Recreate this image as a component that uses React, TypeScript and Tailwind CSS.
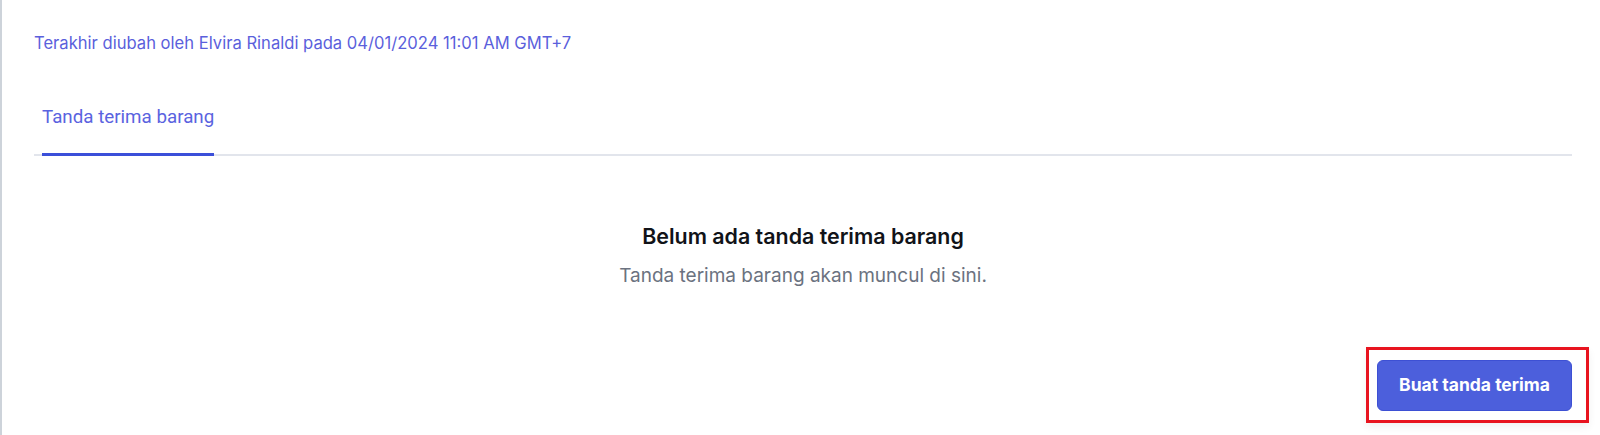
import React from "react";

export default function App() {
  return (
    <div className="h-[435px] w-[1600px] overflow-hidden bg-white">
      <div className="flex h-full flex-col border-l-2 border-[#cdd3da] pl-8 pr-7 pt-[31px] font-['Inter',sans-serif]">
        <p className="text-[16.6px] leading-6 text-[#5b5fdc]">
          Terakhir diubah oleh Elvira Rinaldi pada 04/01/2024 11:01 AM GMT+7
        </p>

        <div className="mt-[48px] flex border-b-2 border-[#e2e5ec] pl-2">
          <button className="-mb-[2px] border-b-[3px] border-[#3b4fd9] pb-[22px] font-['Roboto',sans-serif] text-[18.75px] leading-7 text-[#5a63e0]">
            Tanda terima barang
          </button>
        </div>

        <div className="mt-[64px] flex flex-col items-center">
          <h2 className="text-[21.4px] font-semibold leading-8 text-[#111318]">
            Belum ada tanda terima barang
          </h2>
          <p className="mt-2.5 text-[19px] leading-7 text-[#6b7280]">
            Tanda terima barang akan muncul di sini.
          </p>
        </div>

        <div className="mt-[70px] flex justify-end">
          <div className="relative">
            <button className="flex h-[51px] w-[195px] items-center justify-center rounded-md border border-[#3d50d4] bg-[#4c5fdc] text-[17.5px] font-bold text-white">
              Buat tanda terima
            </button>
            <div className="pointer-events-none absolute -bottom-[12px] -left-[11px] -right-[17px] -top-[13px] border-[3px] border-[#e8141f] shadow-[0_4px_8px_rgba(0,0,0,0.06)]" />
          </div>
        </div>
      </div>
    </div>
  );
}
